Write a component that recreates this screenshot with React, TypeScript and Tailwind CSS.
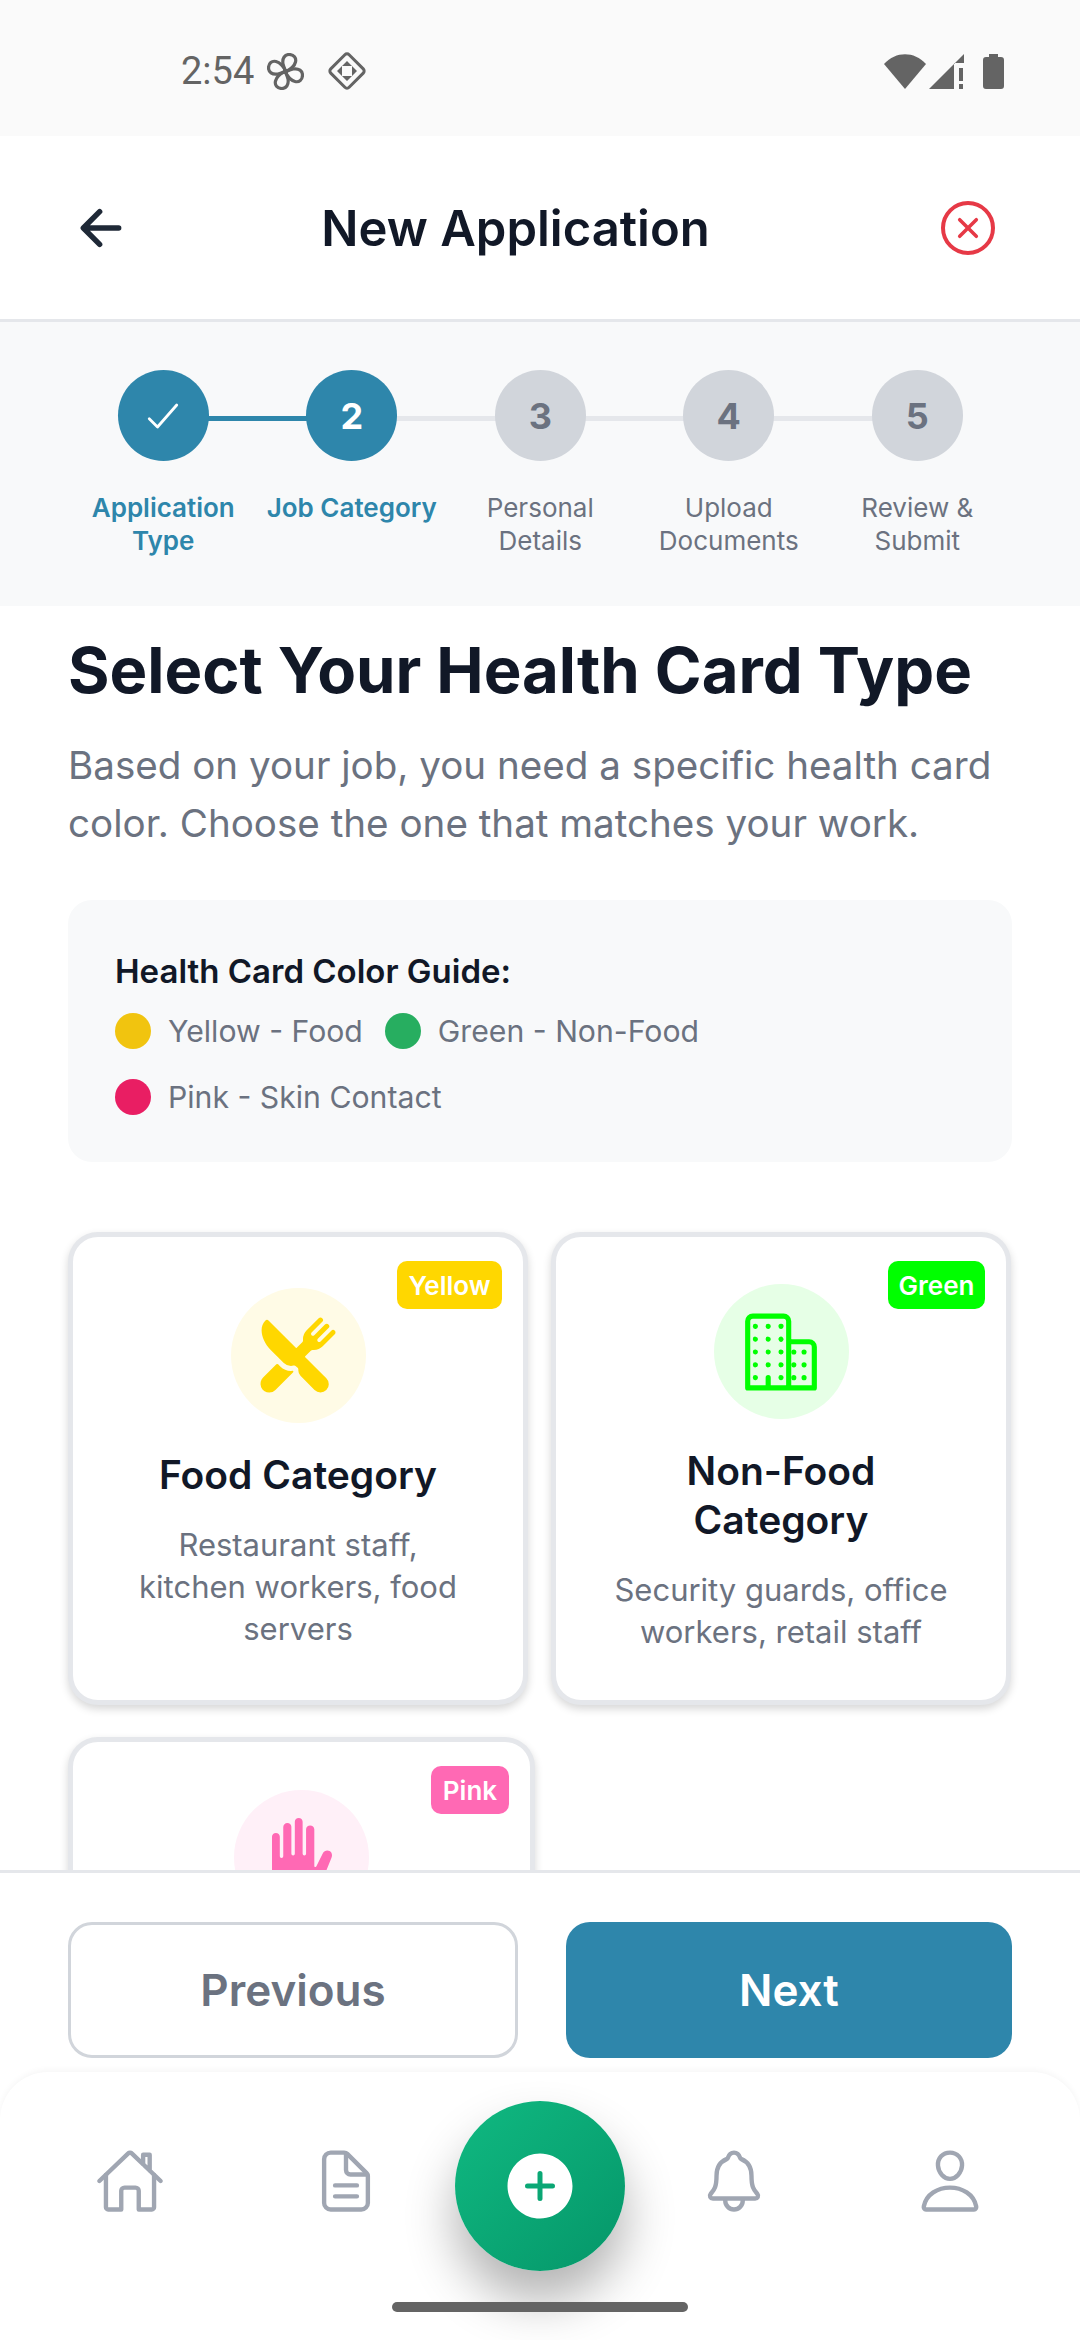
import {
  IoAddCircle,
  IoArrowBack,
  IoBusinessOutline,
  IoCheckmarkOutline,
  IoClose,
  IoDocumentTextOutline,
  IoHandLeft,
  IoHomeOutline,
  IoNotificationsOutline,
  IoPersonOutline,
  IoRestaurant,
} from 'react-icons/io5';
import type { ReactNode } from 'react';

type StepProps = { n: number; label: string; state: 'done' | 'current' | 'todo' };

const steps: StepProps[] = [
  { n: 1, label: 'Application Type', state: 'done' },
  { n: 2, label: 'Job Category', state: 'current' },
  { n: 3, label: 'Personal Details', state: 'todo' },
  { n: 4, label: 'Upload Documents', state: 'todo' },
  { n: 5, label: 'Review & Submit', state: 'todo' },
];

const Step = ({ n, label, state }: StepProps) => (
  <div className="w-[188.5px] flex flex-col items-center relative">
    {n < 5 && (
      <div
        className={`absolute top-[46px] left-[94px] w-[189px] h-[5px] ${
          state === 'done' ? 'bg-[#2e86ab]' : 'bg-[#e5e7eb]'
        }`}
      />
    )}
    <div
      className={`relative w-[91px] h-[91px] rounded-full flex items-center justify-center text-[36px] font-bold ${
        state === 'todo' ? 'bg-[#d1d5db] text-[#6b7280]' : 'bg-[#2e86ab] text-white'
      }`}
    >
      {state === 'done' ? <IoCheckmarkOutline size={44} /> : n}
    </div>
    <p
      className={`mt-[30px] w-[180px] text-center text-[26px] leading-[33px] ${
        state === 'todo' ? 'text-[#6b7280]' : 'text-[#2e86ab] font-semibold'
      }`}
    >
      {label}
    </p>
  </div>
);

const Dot = ({ color, label }: { color: string; label: string }) => (
  <div className="flex items-center gap-[17px] mr-[22px]">
    <span className={`w-9 h-9 rounded-full ${color}`} />
    <span className="text-[30.2px] leading-[40px] text-[#6b7280]">{label}</span>
  </div>
);

type CardProps = {
  badge: string;
  badgeColor: string;
  circle: string;
  icon: ReactNode;
  title?: string;
  desc?: string;
  width: string;
  badgeWidth: string;
};

const Card = ({ badge, badgeColor, circle, icon, title, desc, width, badgeWidth }: CardProps) => (
  <div
    className={`relative ${width} h-[473px] shrink-0 rounded-[30px] border-[5px] border-[#e5e7eb] bg-white shadow-[0_4px_8px_rgba(0,0,0,0.16)] flex flex-col items-center px-[55px] ${
      title ? 'justify-center' : 'pt-[48px]'
    }`}
  >
    <span
      className={`absolute top-[24px] right-[21px] ${badgeWidth} h-[48px] rounded-[10px] ${badgeColor} text-white text-[26px] font-semibold flex items-center justify-center`}
    >
      {badge}
    </span>
    <div className={`w-[135px] h-[135px] rounded-full shrink-0 flex items-center justify-center ${circle}`}>
      {icon}
    </div>
    {title && (
      <h3 className="mt-[27px] text-center text-[39px] leading-[49px] font-semibold text-[#111827]">{title}</h3>
    )}
    {desc && <p className="mt-[25px] text-center text-[31px] leading-[42px] text-[#6b7280]">{desc}</p>}
  </div>
);

const Blade = ({ angle }: { angle: number }) => (
  <path
    d="M18.5 19 L16 11 C15 5 18 1.5 22 1.5 C27 1.5 29.5 5 28.5 9 C27.5 13 23.5 16.5 18.5 19 Z"
    transform={`rotate(${angle} 18.5 18.5)`}
  />
);

const StatusBar = () => (
  <div className="h-[136px] shrink-0 bg-[#fafafa] flex items-center pt-[6px] pl-[181px] pr-[76px] text-[#646464] font-['Roboto',sans-serif]">
    <span className="text-[38px]">2:54</span>
    <svg width="37" height="37" viewBox="0 0 37 37" fill="none" stroke="#646464" strokeWidth="3.2" className="ml-[13px]">
      <Blade angle={0} />
      <Blade angle={90} />
      <Blade angle={180} />
      <Blade angle={270} />
    </svg>
    <svg width="40" height="40" viewBox="0 0 40 40" fill="none" stroke="#646464" strokeWidth="3" className="ml-[23px]">
      <rect x="7" y="7" width="26" height="26" rx="3" transform="rotate(45 20 20)" />
      <path d="M20 10 L25 15 H15 Z M20 30 L25 25 H15 Z M10 20 L15 15 V25 Z M30 20 L25 15 V25 Z" fill="#646464" stroke="none" />
      <circle cx="20" cy="20" r="3.5" fill="#fafafa" stroke="none" />
    </svg>
    <div className="ml-auto flex items-center">
      <svg width="42" height="35" viewBox="0 0 42 35">
        <path d="M0 10 C12 -3 30 -3 42 10 L21 35 Z" fill="#646464" />
      </svg>
      <svg width="35" height="35" viewBox="0 0 35 35" className="ml-[3px]">
        <path d="M0 35 L35 0 V9 H25 V35 Z" fill="#646464" />
        <rect x="30" y="14" width="4" height="13" fill="#646464" />
        <rect x="30" y="30" width="4" height="5" fill="#646464" />
      </svg>
      <svg width="21" height="35" viewBox="0 0 21 35" className="ml-[19px]">
        <path d="M6 0 H15 V3 H18 C20 3 21 4 21 6 V32 C21 34 20 35 18 35 H3 C1 35 0 34 0 32 V6 C0 4 1 3 3 3 H6 Z" fill="#646464" />
      </svg>
    </div>
  </div>
);

const App = () => {
  return (
    <div className="font-['Inter',sans-serif] w-[1080px] h-[2340px] bg-white flex flex-col overflow-hidden relative">
      <StatusBar />

      {/* header */}
      <div className="h-[186px] shrink-0 bg-white border-b-[3px] border-[#e5e7eb] flex items-center justify-between pl-[72px] pr-[85px]">
        <IoArrowBack size={58} className="text-[#1f2937]" />
        <h1 className="text-[49px] font-semibold text-[#111827] mr-[40px] pt-[2px]">New Application</h1>
        <div className="w-[54px] h-[54px] rounded-full border-[4px] border-[#e63946] flex items-center justify-center">
          <IoClose size={38} className="text-[#e63946]" />
        </div>
      </div>

      {/* steps */}
      <div className="h-[284px] shrink-0 bg-[#f8f9fa] pt-[48px] pl-[69px] flex">
        {steps.map((s) => (
          <Step key={s.n} {...s} />
        ))}
      </div>

      {/* scroll content */}
      <div className="flex-1 min-h-0 overflow-hidden px-[68px] pt-[27px] border-b-[3px] border-[#e5e7eb]">
        <h2 className="text-[63.4px] leading-[74px] font-bold text-[#111827]">Select Your Health Card Type</h2>
        <p className="mt-[29px] text-[38.6px] leading-[58px] text-[#6b7280]">
          Based on your job, you need a specific health card color. Choose the one that matches your work.
        </p>
        <div className="mt-[48px] h-[262px] rounded-[24px] bg-[#f8f9fa] pl-[47px] pt-[50px]">
          <p className="text-[33px] leading-[42px] font-semibold text-[#111827]">Health Card Color Guide:</p>
          <div className="mt-[19px] flex flex-wrap gap-y-[26px]">
            <Dot color="bg-[#f1c40f]" label="Yellow - Food" />
            <Dot color="bg-[#27ae60]" label="Green - Non-Food" />
            <Dot color="bg-[#e91e63]" label="Pink - Skin Contact" />
          </div>
        </div>
        <div className="mt-[70px] flex flex-wrap gap-x-[23px] gap-y-[32px]">
          <Card
            badge="Yellow"
            badgeColor="bg-[#ffd700]"
            circle="bg-[#fffbe6]"
            icon={<IoRestaurant size={80} className="text-[#ffd700]" />}
            title="Food Category"
            desc="Restaurant staff, kitchen workers, food servers"
            width="w-[460px]"
            badgeWidth="w-[105px]"
          />
          <Card
            badge="Green"
            badgeColor="bg-[#00ff00]"
            circle="bg-[#e6ffe6]"
            icon={<IoBusinessOutline size={82} className="text-[#00ff00]" />}
            title="Non-Food Category"
            desc="Security guards, office workers, retail staff"
            width="w-[460px]"
            badgeWidth="w-[97px]"
          />
          <Card
            badge="Pink"
            badgeColor="bg-[#ff69b4]"
            circle="bg-[#fff0f8]"
            icon={<IoHandLeft size={80} className="text-[#ff69b4]" />}
            width="w-[467px]"
            badgeWidth="w-[78px]"
          />
        </div>
      </div>

      {/* buttons */}
      <div className="h-[199px] shrink-0 pl-[68px] pr-[68px] pt-[49px] flex justify-between bg-white">
        <button className="w-[450px] h-[136px] rounded-[24px] border-[3px] border-[#d1d5db] text-[44px] font-semibold text-[#6b7280]">
          Previous
        </button>
        <button className="w-[446px] h-[136px] rounded-[24px] bg-[#2e86ab] text-[44px] font-semibold text-white">
          Next
        </button>
      </div>

      {/* bottom nav */}
      <div className="h-[268px] shrink-0 bg-white rounded-t-[48px] shadow-[0_-2px_6px_rgba(0,0,0,0.04)] relative flex items-start px-[22px] pt-[74px] text-[#a0a6b2]">
        <div className="w-[216px] flex justify-center">
          <IoHomeOutline size={70} />
        </div>
        <div className="w-[216px] flex justify-center">
          <IoDocumentTextOutline size={70} />
        </div>
        <div className="flex-1" />
        <div className="w-[216px] flex justify-center">
          <IoNotificationsOutline size={70} />
        </div>
        <div className="w-[216px] flex justify-center">
          <IoPersonOutline size={70} />
        </div>
        <div className="absolute left-[455px] top-[29px] w-[170px] h-[170px] rounded-full bg-[linear-gradient(135deg,#10b981,#059669)] shadow-[0_30px_50px_rgba(0,0,0,0.3)] flex items-center justify-center">
          <IoAddCircle size={80} className="text-white" />
        </div>
        <div className="absolute left-[392px] top-[230px] w-[296px] h-[10px] rounded-full bg-[#646464]" />
      </div>
    </div>
  );
};

export default App;
